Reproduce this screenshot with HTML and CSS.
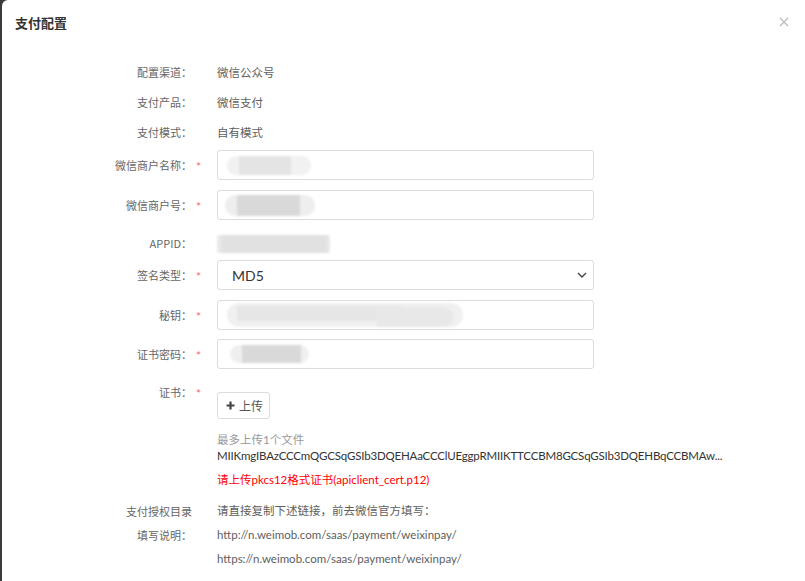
FILE: index.html
```html
<!DOCTYPE html>
<html lang="zh-CN">
<head>
    <meta charset="UTF-8">
    <title>支付配置</title>
    <link rel="stylesheet" href="styles.css">
</head>
<body>
    <div class="modal">
        <div class="modal-header">
            <h3>支付配置</h3>
            <span class="close">
                <svg width="10" height="10" viewBox="0 0 10 10"><path d="M1 1L9 9M9 1L1 9" stroke="#bbb" stroke-width="1.2" fill="none"/></svg>
            </span>
        </div>

        <div class="form">
            <div class="row row-info">
                <label>配置渠道：</label><span></span>
                <div class="field">微信公众号</div>
            </div>
            <div class="row row-info">
                <label>支付产品：</label><span></span>
                <div class="field">微信支付</div>
            </div>
            <div class="row row-info">
                <label>支付模式：</label><span></span>
                <div class="field">自有模式</div>
            </div>

            <div class="row row-input first">
                <label>微信商户名称：</label><span class="star">*</span>
                <div class="input"><span class="mask mask-name"><b></b></span></div>
            </div>
            <div class="row row-input">
                <label>微信商户号：</label><span class="star">*</span>
                <div class="input"><span class="mask mask-mch"><b></b></span></div>
            </div>
            <div class="row row-appid">
                <label>APPID：</label><span></span>
                <div class="field"><span class="mask mask-appid"><b></b></span></div>
            </div>
            <div class="row row-select">
                <label>签名类型：</label><span class="star">*</span>
                <div class="input select">
                    <span>MD5</span>
                    <svg width="10" height="6" viewBox="0 0 10 6"><path d="M1 1L5 5L9 1" stroke="#444" stroke-width="1.4" fill="none"/></svg>
                </div>
            </div>
            <div class="row row-input key">
                <label>秘钥：</label><span class="star">*</span>
                <div class="input"><span class="mask mask-key"><b></b><i></i></span></div>
            </div>
            <div class="row row-input pwd">
                <label>证书密码：</label><span class="star">*</span>
                <div class="input"><span class="mask mask-pwd"><b></b></span></div>
            </div>

            <div class="row row-cert">
                <label>证书：</label><span class="star">*</span>
                <div class="field">
                    <button class="upload">
                        <svg width="9" height="9" viewBox="0 0 9 9"><path d="M4.5 0.5V8.5M0.5 4.5H8.5" stroke="#444" stroke-width="2.2"/></svg>
                        上传
                    </button>
                    <div class="tip">最多上传1个文件</div>
                    <div class="file-name">MIIKmgIBAzCCCmQGCSqGSIb3DQEHAaCCClUEggpRMIIKTTCCBM8GCSqGSIb3DQEHBqCCBMAw...</div>
                    <div class="error">请上传pkcs12格式证书(apiclient_cert.p12)</div>
                </div>
            </div>

            <div class="row row-text">
                <label>支付授权目录</label><span></span>
                <div class="field">请直接复制下述链接，前去微信官方填写：</div>
            </div>
            <div class="row row-text">
                <label>填写说明：</label><span></span>
                <div class="field">
                    <div>http://n.weimob.com/saas/payment/weixinpay/</div>
                    <div>https://n.weimob.com/saas/payment/weixinpay/</div>
                </div>
            </div>
        </div>
    </div>
</body>
</html>
```

FILE: styles.css
```css
html, body {
    margin: 0;
    height: 100%;
}
body {
    background: #3a3a3a;
    font-family: "Lato", "Noto Sans CJK SC", sans-serif;
    color: #606060;
    overflow: hidden;
}
.modal {
    margin-left: 2px;
    height: 100%;
    background: #fff;
    border-top-left-radius: 6px;
}
.modal-header {
    height: 44px;
    display: flex;
    align-items: center;
    justify-content: space-between;
    padding: 0 16px 0 13px;
}
.modal-header h3 {
    margin: 0;
    font-size: 13px;
    font-weight: bold;
    color: #333;
    font-family: "Noto Sans CJK SC", sans-serif;
}
.close {
    display: flex;
    margin-top: -1px;
}
.form {
    padding-top: 13px;
}
.row {
    display: grid;
    grid-template-columns: 190px 25px 377px;
    align-items: center;
}
.row label {
    text-align: right;
    font-size: 11px;
    color: #666;
    font-family: "Noto Sans CJK SC", sans-serif;
}
.star {
    color: #f56c6c;
    font-size: 12px;
    padding-left: 4px;
    line-height: 1;
    padding-top: 3px;
}
.field {
    font-size: 11.5px;
}
.row-info {
    height: 30px;
}
.row-input {
    height: 30px;
    margin-top: 10px;
}
.row-input.first {
    margin-top: 3px;
}
.row-input.pwd {
    margin-top: 9px;
}
.row-appid {
    height: 30px;
    margin-top: 8px;
}
.row-select {
    height: 30px;
    margin-top: 2px;
}
.input {
    box-sizing: border-box;
    height: 100%;
    border: 1px solid #dcdcdc;
    border-radius: 3px;
    display: flex;
    align-items: center;
}
.select {
    justify-content: space-between;
    padding: 0 6px 0 14px;
    font-size: 14px;
    color: #333;
}

/* blurred values */
.mask {
    position: relative;
    display: block;
    height: 19px;
    background: #f1f1f1;
    border-radius: 10px;
    filter: blur(0.8px);
}
.mask b {
    position: absolute;
    top: 0;
    bottom: 0;
    left: 12px;
    right: 12px;
    background: #e4e4e4;
}
.mask-name {
    margin-left: 9px;
    width: 84px;
}
.mask-name b { right: 20px; }
.mask-mch {
    margin-left: 7px;
    width: 90px;
    height: 21px;
    background: #eee;
}
.mask-mch b { background: #d9d9d9; right: 15px; }
.mask-appid {
    width: 113px;
    height: 18px;
    background: #e9e9e9;
    border-radius: 2px;
    margin-top: 1px;
}
.mask-appid b { left: 4px; right: 3px; background: #e1e1e1; }
.mask-key {
    margin-left: 9px;
    width: 236px;
    height: 24px;
    background: #f0f0f0;
    border-radius: 12px;
}
.mask-key b { left: 10px; right: 60px; top: 3px; bottom: 6px; background: #e6e6e6; }
.mask-key i {
    position: absolute;
    top: 4px;
    bottom: 0;
    left: 150px;
    right: 10px;
    background: #e8e8e8;
    border-radius: 0 10px 10px 0;
}
.mask-pwd {
    margin-left: 12px;
    width: 79px;
    height: 18px;
    background: #efefef;
}
.mask-pwd b { background: #d9d9d9; right: 8px; }

.row-cert {
    margin-top: 15px;
    align-items: start;
}
.row-cert label, .row-cert .star {
    line-height: 16px;
}
.row-cert .star {
    padding-top: 2px;
}
.row-cert .field {
    padding-top: 8px;
    line-height: 16px;
}
.upload {
    box-sizing: border-box;
    height: 27px;
    width: 53px;
    border: 1px solid #dcdcdc;
    border-radius: 3px;
    background: #fff;
    color: #555;
    font-size: 12px;
    font-family: "Noto Sans CJK SC", sans-serif;
    display: flex;
    align-items: center;
    gap: 4px;
    padding: 0 0 0 8px;
}
.tip {
    margin-top: 13px;
    color: #999;
}
.file-name {
    white-space: nowrap;
    letter-spacing: -0.18px;
    color: #333;
}
.error {
    margin-top: 8px;
    color: #f00;
}
.row-text {
    align-items: start;
    line-height: 24px;
}
.row-cert + .row-text {
    margin-top: 11px;
}
.row-text label {
    line-height: 24px;
}
```
